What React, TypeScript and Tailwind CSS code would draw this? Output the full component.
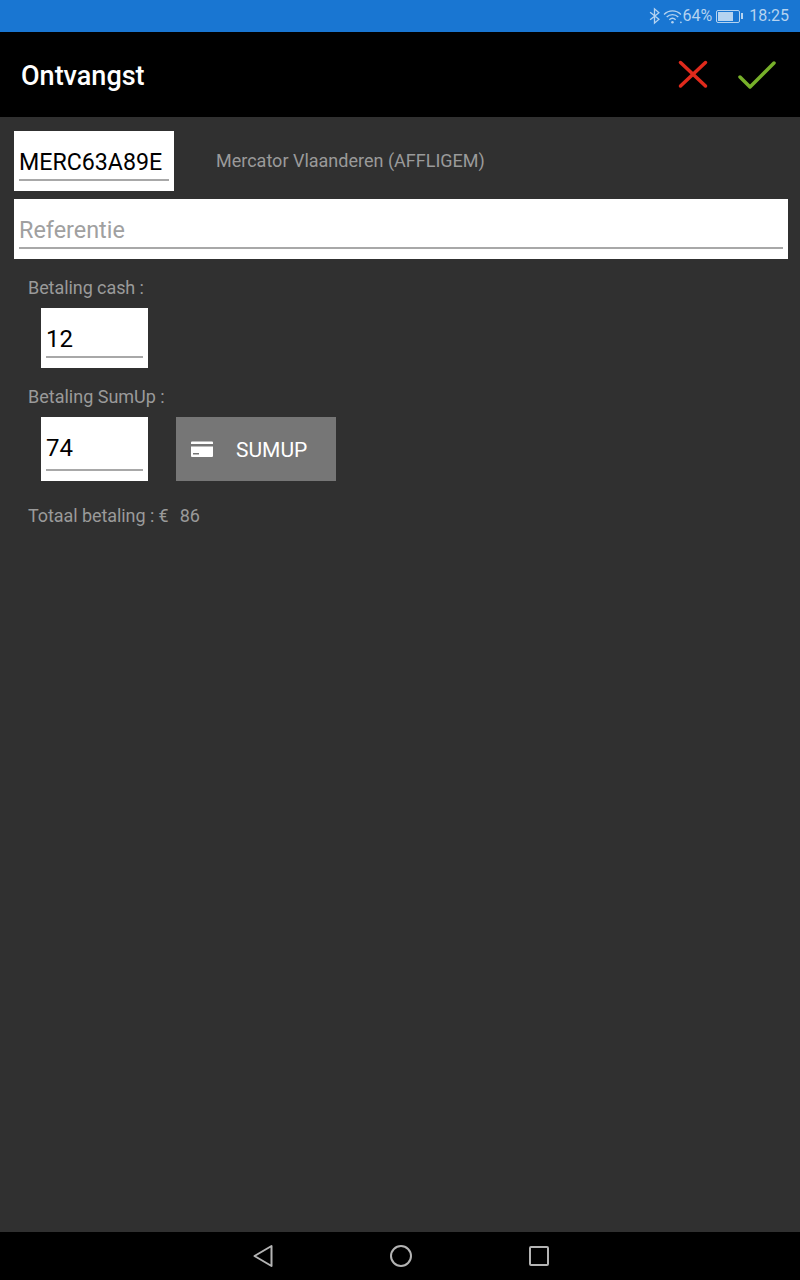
import { CSSProperties } from 'react'

const roboto: CSSProperties = { fontFamily: 'Roboto, sans-serif' }

function StatusBar() {
  return (
    <div className="flex h-[32px] items-center justify-end bg-[#1976d2] pr-[11px] text-[16px] text-[#b5d3f0]">
      <svg width="11" height="18" viewBox="0 0 10 16" fill="none" stroke="#b5d3f0" strokeWidth="1.2" className="mr-[3px]">
        <path d="M1 4.500l8 6.500-4 3.500V1.500l4 3.500-8 6.500" />
      </svg>
      <svg width="20" height="17" viewBox="0 0 19 16" fill="none" stroke="#b5d3f0" strokeWidth="1.3" className="mr-[-1px]">
        <path d="M1 6c4.500-4.500 11.500-4.500 16 0" />
        <path d="M3.500 8.500c3-3 8-3 11 0" />
        <path d="M6 11c1.700-1.500 4.300-1.500 6 0" />
        <circle cx="9" cy="13.500" r="1.200" fill="#b5d3f0" stroke="none" />
        <circle cx="17" cy="13.500" r="0.800" fill="#b5d3f0" stroke="none" />
      </svg>
      <span className="mr-[4px]">64%</span>
      <div className="mr-[1px] flex h-[13px] w-[24px] items-center rounded-[2px] border border-[#b5d3f0] p-[1px]">
        <div className="h-full w-[15px] bg-[#b5d3f0]" />
      </div>
      <div className="mr-[6px] h-[6px] w-[2px] bg-[#b5d3f0]" />
      <span>18:25</span>
    </div>
  )
}

function Toolbar() {
  return (
    <div className="flex h-[85px] items-center justify-between bg-black pl-[21px] pr-[24px]">
      <span className="pt-[4px] text-[27px] leading-none font-medium text-white">Ontvangst</span>
      <div className="flex items-center gap-[29px]">
        <svg width="32" height="32" viewBox="0 0 32 32" fill="none" stroke="#e02a1c" strokeWidth="3.500" strokeLinecap="round">
          <path d="M3.500 3.500l25 23.500" />
          <path d="M28.500 3.500L3.500 27" />
        </svg>
        <svg width="38" height="30" viewBox="0 0 38 30" fill="none" stroke="#77b02a" strokeWidth="3.500" strokeLinecap="round" strokeLinejoin="round">
          <path d="M2 17l10 10L36 3" />
        </svg>
      </div>
    </div>
  )
}

function Field({ value, placeholder, className, textClass }: { value?: string; placeholder?: string; className: string; textClass?: string }) {
  return (
    <div className={`flex flex-col justify-end bg-white px-[5px] pb-[10px] ${className}`}>
      <div className={`leading-[28px] ${textClass ?? 'text-[24px]'} ${value ? 'text-black' : 'text-[#a0a0a0]'}`}>{value ?? placeholder}</div>
      <div className="mt-[3px] h-[2px] bg-[#a8a8a8]" />
    </div>
  )
}

function CardIcon() {
  return (
    <svg width="22" height="18" viewBox="0 0 22 18" fill="#ffffff">
      <path d="M0 2.500a1 1 0 0 1 1-1h20a1 1 0 0 1 1 1V4H0z" />
      <path fillRule="evenodd" d="M0 6.500h22V16a1 1 0 0 1-1 1H1a1 1 0 0 1-1-1zM2 13v1.500h6V13z" />
    </svg>
  )
}

export default function App() {
  return (
    <div className="flex h-[1280px] w-[800px] flex-col bg-[#303030]" style={roboto}>
      <StatusBar />
      <Toolbar />

      <div className="flex-1 pt-[14px]">
        <div className="flex items-center pl-[14px]">
          <Field value="MERC63A89E" className="h-[60px] w-[160px]" textClass="text-[23.200px]" />
          <span className="ml-[42px] text-[18px] leading-[24px] text-[#9a9a9a]">Mercator Vlaanderen (AFFLIGEM)</span>
        </div>

        <div className="mt-[8px] pl-[14px]">
          <Field placeholder="Referentie" className="h-[60px] w-[774px]" textClass="text-[23.400px]" />
        </div>

        <div className="mt-[18px] pl-[28px] text-[18px] leading-[22px] tracking-[-0.07px] text-[#9a9a9a]">Betaling cash :</div>
        <div className="mt-[9px] pl-[41px]">
          <Field value="12" className="h-[60px] w-[107px]" />
        </div>

        <div className="mt-[18px] pl-[28px] text-[18px] leading-[22px] text-[#9a9a9a]">Betaling SumUp :</div>
        <div className="mt-[9px] flex pl-[41px]">
          <Field value="74" className="h-[64px] w-[107px]" textClass="mb-[4px] text-[24px]" />
          <div className="ml-[28px] flex h-[64px] w-[160px] items-center bg-[#767676] pl-[15px]">
            <CardIcon />
            <span className="ml-[23px] pt-[2px] text-[21px] leading-none text-white">SUMUP</span>
          </div>
        </div>

        <div className="mt-[24px] flex pl-[28px] text-[18px] leading-[22px] tracking-[-0.07px] text-[#9a9a9a]">
          <span>Totaal betaling : €</span>
          <span className="ml-[11px]">86</span>
        </div>
      </div>

      <div className="flex h-[48px] items-center bg-black pl-[253px]">
        <svg width="20" height="24" viewBox="0 0 20 24" fill="none" stroke="#b4b4b4" strokeWidth="2" strokeLinejoin="round">
          <path d="M1.500 12L18.500 2v20z" />
        </svg>
        <svg width="24" height="24" viewBox="0 0 24 24" fill="none" stroke="#b4b4b4" strokeWidth="2" className="ml-[116px]">
          <circle cx="12" cy="12" r="10" />
        </svg>
        <svg width="20" height="20" viewBox="0 0 20 20" fill="none" stroke="#b4b4b4" strokeWidth="2" className="ml-[116px]">
          <rect x="1" y="1" width="18" height="18" rx="1" />
        </svg>
      </div>
    </div>
  )
}
